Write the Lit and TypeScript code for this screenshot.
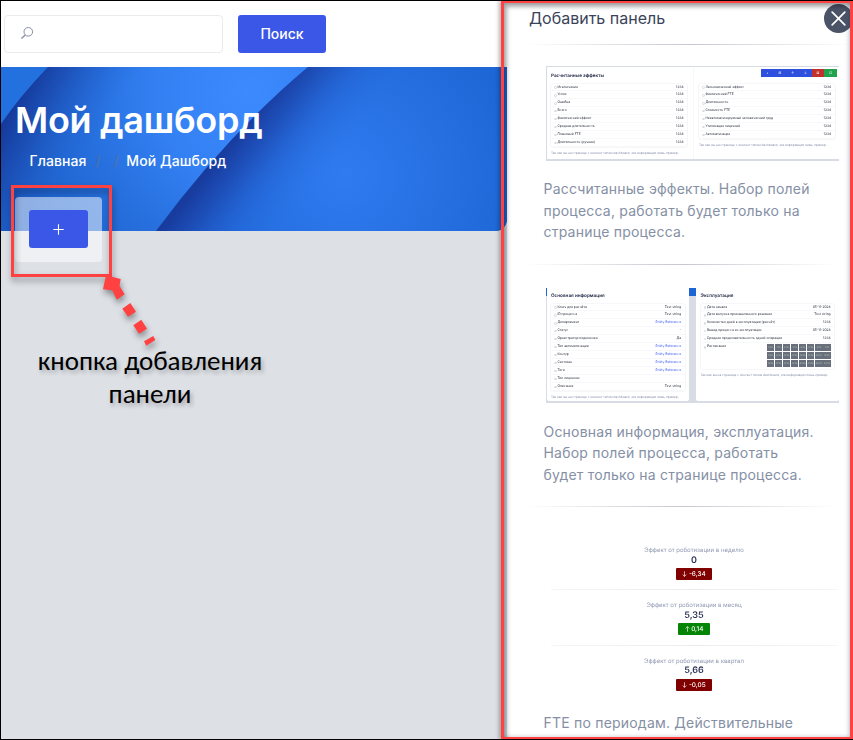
import { LitElement, html, css, svg, nothing } from "lit";
import { customElement, property } from "lit/decorators.js";

type Row = [label: string, value: string, link?: boolean];

const NOTE = "Так как вы на странице с контент типом dashboard, эта информация лишь пример.";

const EFFECTS_LEFT: Row[] = [
  "Исключения", "Успех", "Ошибка", "Всего", "Фактический эффект",
  "Средняя длительность", "Плановый FTE", "Длительность (ручная)",
].map((t) => [t, "1234"] as Row);

const EFFECTS_RIGHT: Row[] = [
  "Экономический эффект", "Фактический FTE", "Длительность", "Стоимость FTE",
  "Неавтоматизируемый человеческий труд", "Утилизация лицензий", "Автоматизация",
].map((t) => [t, "1234"] as Row);

const INFO: Row[] = [
  ["Ключ для расчёта", "Test string"],
  ["ID процесса", "Test string"],
  ["Департамент", "Entity Reference", true],
  ["Статус", "-"],
  ["Оркестратор подключен", "Да"],
  ["Тип автоматизации", "Entity Reference", true],
  ["Контур", "Entity Reference", true],
  ["Системы", "Entity Reference", true],
  ["Теги", "Entity Reference", true],
  ["Тип лицензии", ""],
  ["Описание", "Test string"],
];

const USAGE: Row[] = [
  ["Дата начала", "05-11-2024"],
  ["Дата выпуска промышленного решения", "Test string"],
  ["Количество дней в эксплуатации (расчёт)", "1234"],
  ["Вывод процесса из эксплуатации", "05-11-2024"],
  ["Средняя продолжительность одной операции", "1234"],
];

@customElement("field-table")
export class FieldTable extends LitElement {
  @property({ attribute: false }) rows: Row[] = [];
  @property({ type: Boolean }) schedule = false;

  static styles = css`
    :host { display: block; text-rendering: geometricPrecision; }
    .table { border-radius: 1.5px; box-shadow: 0 0 0 0.6px #eff0f4; }
    .row {
      box-sizing: border-box; height: 7.95px; padding: 0 3.4px 0 3.4px;
      display: flex; align-items: center; gap: 0.6px;
      box-shadow: inset 0 -0.6px #f1f2f5;
      font: 3.3px/7.9px Inter, sans-serif; color: #1f2536; white-space: nowrap;
    }
    .mark { box-sizing: border-box; width: 2.4px; height: 2.4px; border: 0.4px solid #c3c7d0; border-radius: 50%; opacity: 0.6; }
    .value { margin-left: auto; }
    .link { color: #3353f0; }
    .tall { height: 26px; align-items: flex-start; box-shadow: none; }
    .tall .mark { margin-top: 3px; }
    .hours { margin-left: auto; display: grid; grid-template-columns: repeat(8, 7.2px); gap: 1px 0.9px; margin-top: 1.2px; }
    .hour { height: 7px; background: #68707c; color: #c5c9cf; text-align: center; font-size: 2.1px; line-height: 7px; }
  `;

  render() {
    return html`<div class="table">
      ${this.rows.map(([label, value, link]) => html`
        <div class="row"><span class="mark"></span><span>${label}</span>
          <span class="value ${link ? "link" : ""}">${value}</span></div>`)}
      ${this.schedule ? html`<div class="row tall"><span class="mark"></span><span>Расписание</span>
        <div class="hours">${Array.from({ length: 24 }, (_, i) => html`<span class="hour">${i}:00</span>`)}</div>
      </div>` : nothing}
    </div>`;
  }
}

@customElement("hero-art")
export class HeroArt extends LitElement {
  static styles = css`:host, svg { display: block; }`;
  render() {
    return html`<svg width="506" height="164" viewBox="1 67 506 164">
      ${svg`<defs>
        <radialGradient id="mid" gradientUnits="userSpaceOnUse" cx="250" cy="92" r="270">
          <stop offset="0" stop-color="#3d8aff"/><stop offset=".35" stop-color="#3380f3"/>
          <stop offset=".62" stop-color="#266fdd"/><stop offset="1" stop-color="#1a5ec6"/>
        </radialGradient>
        <linearGradient id="midShade" gradientUnits="userSpaceOnUse" x1="22" y1="92" x2="100" y2="136">
          <stop offset="0" stop-color="#153a9b"/><stop offset=".3" stop-color="#1a47ac" stop-opacity=".75"/>
          <stop offset="1" stop-color="#2468d8" stop-opacity="0"/>
        </linearGradient>
        <radialGradient id="right" gradientUnits="userSpaceOnUse" cx="345" cy="175" r="190">
          <stop offset="0" stop-color="#2f7bf0"/><stop offset=".5" stop-color="#2670e2"/>
          <stop offset="1" stop-color="#1c65d4"/>
        </radialGradient>
        <linearGradient id="rightShade" gradientUnits="userSpaceOnUse" x1="231" y1="142" x2="305" y2="200">
          <stop offset="0" stop-color="#183b9e"/><stop offset=".25" stop-color="#1c48b0" stop-opacity=".8"/>
          <stop offset=".6" stop-color="#225bcb" stop-opacity=".35"/><stop offset="1" stop-color="#2a72e6" stop-opacity="0"/>
        </linearGradient>
      </defs>
      <rect x="1" y="67" width="506" height="164" fill="url(#mid)"/>
      <rect x="1" y="67" width="506" height="164" fill="url(#midShade)"/>
      <path d="M1 67H48Q20 96 1 124Z" fill="#2370df"/>
      <path d="M308 67Q228 134 156 231H507V67Z" fill="url(#right)"/>
      <path d="M308 67Q228 134 156 231H507V67Z" fill="url(#rightShade)"/>`}
    </svg>`;
  }
}

@customElement("app-root")
export class AppRoot extends LitElement {
  static styles = css`
    :host {
      position: relative; display: flex; box-sizing: border-box; width: 853px; height: 740px;
      overflow: hidden; background: #dde1e6; font-family: Inter, sans-serif;
      border-left: 1px solid #000; border-top: 1px solid #000; border-bottom: 1px solid #000;
    }
    .main { width: 506px; flex: none; }
    .topbar { height: 66px; box-sizing: border-box; padding: 14px 3px; background: #fff; display: flex; gap: 15px; }
    .search { box-sizing: border-box; width: 219px; height: 38px; border: 1px solid #ebebef; border-radius: 4px; padding: 9px 15px; }
    .search svg { display: block; margin-top: 2px; }
    .btn {
      height: 38px; display: flex; align-items: center; justify-content: center;
      border-radius: 3px; background: #3b57e8; color: #fff;
    }
    .find { width: 88px; font: 500 14px/36px Inter, sans-serif; }
    .hero { position: relative; height: 164px; border-radius: 0 0 12px 0; overflow: hidden; }
    .heroText { position: absolute; inset: 0; color: #fff; }
    .heroText h1 { margin: 31px 0 0 14px; font: 600 36px/44px Inter, sans-serif; letter-spacing: -0.3px; white-space: nowrap; }
    .crumbs { margin: 10px 0 0 28.5px; display: flex; font: 500 14px/18px Inter, sans-serif; letter-spacing: 0.08px; white-space: nowrap; }
    .slash { color: #53739f; font-weight: 400; }
    .slash.a { margin-left: 9px; } .slash.b { margin: 0 7.5px 0 13px; }
    .adder {
      position: relative; margin: -34px 0 0 14px; width: 87px; height: 65px; box-sizing: border-box;
      padding: 13px 14px; border-radius: 4px; background: rgba(255, 255, 255, 0.51);
    }
    .caption {
      width: 300px; margin: 82px 0 0 -1px; text-align: center; color: #000;
      font: 27px/33px Carlito, "Open Sans", sans-serif; text-shadow: 2px 3px 4px rgba(0, 0, 0, 0.28);
    }
    .drawer { width: 346px; flex: none; background: #fff; box-sizing: border-box; padding-left: 18px; }
    .head { height: 43px; display: flex; justify-content: space-between; }
    .head h2 { margin: 7px 0 0 4px; font: 400 16px/20px Inter, sans-serif; color: #39435a; }
    .close {
      width: 29px; height: 29px; margin: 3px 0 0; border-radius: 50%; background: #4b5467;
      display: grid; place-items: center; flex: none;
    }
    .rule { height: 1px; margin-right: 16px; background: linear-gradient(90deg, transparent, #c5c8cf 50%, transparent); }
    .head + .rule { margin-right: 0; }
    .item { padding-left: 18.5px; }
    .text { margin: 0; color: #8590a5; font: 400 14px/21.5px Inter, sans-serif; letter-spacing: 0.21px; white-space: nowrap; }
    .shot { box-sizing: border-box; margin-left: 2px; width: 293px; display: flex; filter: blur(0.3px); text-rendering: geometricPrecision; }
    .effects { height: 95px; margin-top: 21px; border: solid #d7dce4; border-width: 1.5px 0 2px 1px; }
    .effects .pane { width: 146px; box-sizing: border-box; padding: 4.5px 5.5px 0 4.5px; flex: none; }
    .effects .pane + .pane { border-left: 0.7px solid #f6f7f9; padding: 2px 4px 0 5.5px; }
    .title { font: 600 4.65px/8px Inter, sans-serif; color: #1d2442; white-space: nowrap; height: 12px; }
    .note { font: 3.14px/5px Inter, sans-serif; color: #8790a8; white-space: nowrap; margin-top: 4px; }
    .tools { display: flex; width: 76px; height: 8px; margin: 0 -2.5px 6.5px auto; }
    .tool { flex: 1; background: #2f4fdd; color: #fff; font: 3.4px/8px Inter, sans-serif; text-align: center; }
    .tool.red { background: #c1302c; } .tool.green { background: #21a24c; }
    .info { height: 115px; margin-top: 23px; background: linear-gradient(#1b66d3 8px, #d7dce5 8px); padding: 0 0.5px 1.5px 1px; gap: 7px; }
    .info .pane { background: #fff; box-sizing: border-box; width: 142.5px; padding: 4px 4.5px 0 4.5px; border-radius: 0 0 2px 2px; flex: none; }
    .info .title { height: 12px; }
    .info .note { margin-top: 4px; }
    .stats { margin: 0; padding-top: 39px; width: 294px; filter: blur(0.2px); text-rendering: geometricPrecision; }
    .stat { height: 55.5px; box-sizing: border-box; display: flex; flex-direction: column; align-items: center; margin-left: 7px; }
    .stat + .stat { background: linear-gradient(90deg, #f6f6f8, #ececf0 50%, #f6f6f8) top left / 100% 1px no-repeat; padding-top: 12px; }
    .stat:first-child { height: 43px; }
    .label { font: 6px/9px Inter, sans-serif; color: #929ab3; }
    .num { margin-top: 0.5px; font: 600 9px/10px Inter, sans-serif; color: #2c3357; }
    .badge { margin-top: 2.5px; height: 12px; flex: none; border-radius: 1px; color: #fff; font: 500 6.4px/12px Inter, sans-serif; background: #800000; display: flex; align-items: center; gap: 1.5px; padding: 0 6.3px; }
    .badge.up { background: #058405; }
    .frame { position: absolute; box-sizing: border-box; border: 3px solid #ff4141; }
    .small { left: 10px; top: 184px; width: 101px; height: 92px; filter: drop-shadow(1px 4px 3px rgba(0, 0, 0, 0.4)); }
    .large { left: 500px; top: -1px; width: 352px; height: 740px; box-shadow: inset 3px 4px 4px rgba(0, 0, 0, 0.3), inset -1px 0 4px rgba(40, 50, 90, 0.3), -2px 0 4px rgba(0, 0, 0, 0.3); }
    .arrow { position: absolute; left: -1px; top: -1px; filter: drop-shadow(1px 4px 3px rgba(0, 0, 0, 0.4)); }
    .first-text { margin-top: 17px; }
    .info + .text { margin-top: 18px; }
    .gap { margin-top: 21px; }
    .last-text { margin-top: 12px; }
  `;

  private stat(label: string, num: string, delta: string, up: boolean) {
    return html`<div class="stat">
      <span class="label">${label}</span><span class="num">${num}</span>
      <span class="badge ${up ? "up" : ""}">
        <svg width="5" height="6" viewBox="0 0 5 6" fill="none" stroke="#fff" stroke-width=".65">
          <path d=${up ? "M2.5 5.7V.6M.6 2.5L2.5.6L4.4 2.5" : "M2.5.3V5.4M.6 3.5L2.5 5.4L4.4 3.5"} />
        </svg>${delta}</span>
    </div>`;
  }

  render() {
    return html`
      <div class="main">
        <div class="topbar">
          <div class="search">
            <svg width="14" height="14" viewBox="0 0 14 14" fill="none" stroke="#878da5" stroke-width="1">
              <circle cx="8.3" cy="4.8" r="4.3" /><path d="M5.3 7.9L1.4 11.4" stroke-width="1.3" />
            </svg>
          </div>
          <div class="btn find">Поиск</div>
        </div>
        <div class="hero">
          <hero-art></hero-art>
          <div class="heroText">
            <h1>Мой дашборд</h1>
            <div class="crumbs"><span>Главная</span><span class="slash a">/</span><span class="slash b">/</span><span>Мой Дашборд</span></div>
          </div>
        </div>
        <div class="adder"><div class="btn">
          <svg width="11" height="11" viewBox="0 0 11 11" stroke="#fff" stroke-width="1.1"><path d="M5.5 .3V10.7M.3 5.5H10.7" /></svg>
        </div></div>
        <div class="caption">кнопка добавления<br />панели</div>
      </div>

      <div class="drawer">
        <div class="head">
          <h2>Добавить панель</h2>
          <div class="close">
            <svg width="15" height="15" viewBox="0 0 15 15" stroke="#fff" stroke-width="1.7" stroke-linecap="round"><path d="M1.2 1.2L13.8 13.8M13.8 1.2L1.2 13.8" /></svg>
          </div>
        </div>
        <div class="rule"></div>
        <div class="item">
          <div class="shot effects">
            <div class="pane">
              <div class="title">Расчитанные эффекты</div>
              <field-table .rows=${EFFECTS_LEFT}></field-table>
              <div class="note">${NOTE}</div>
            </div>
            <div class="pane">
              <div class="tools">
                <span class="tool">+</span><span class="tool">⊞</span><span class="tool">↑</span><span class="tool">↓</span>
                <span class="tool red">⊠</span><span class="tool green">⊡</span>
              </div>
              <field-table .rows=${EFFECTS_RIGHT}></field-table>
              <div class="note">${NOTE}</div>
            </div>
          </div>
          <p class="text first-text">Рассчитанные эффекты. Набор полей<br />процесса, работать будет только на<br />странице процесса.</p>
        </div>
        <div class="rule gap"></div>
        <div class="item">
          <div class="shot info">
            <div class="pane">
              <div class="title">Основная информация</div>
              <field-table .rows=${INFO}></field-table>
              <div class="note">${NOTE}</div>
            </div>
            <div class="pane">
              <div class="title">Эксплуатация</div>
              <field-table .rows=${USAGE} schedule></field-table>
              <div class="note">${NOTE}</div>
            </div>
          </div>
          <p class="text">Основная информация, эксплуатация.<br />Набор полей процесса, работать<br />будет только на странице процесса.</p>
        </div>
        <div class="rule gap"></div>
        <div class="item">
          <div class="stats">
            ${this.stat("Эффект от роботизации в неделю", "0", "-6,34", false)}
            ${this.stat("Эффект от роботизации в месяц", "5,35", "0,14", true)}
            ${this.stat("Эффект от роботизации в квартал", "5,66", "-0,05", false)}
          </div>
          <p class="text last-text">FTE по периодам. Действительные</p>
        </div>
      </div>

      <div class="frame small"></div>
      <svg class="arrow" width="170" height="360" fill="#ff4141">
        <path d="M106 275.3L120.7 279L119.5 286L124.7 294.3L116.7 299.7L112.3 290.3L103 289.3Z
          M122.3 308.7L130.3 303L136 311.7L128 316.7Z M133.3 325.3L141.3 319.7L147 328.7L139 333.7Z
          M144 341.3L153.3 336L155.3 340L146.3 345.7Z" />
      </svg>
      <div class="frame large"></div>
    `;
  }
}
